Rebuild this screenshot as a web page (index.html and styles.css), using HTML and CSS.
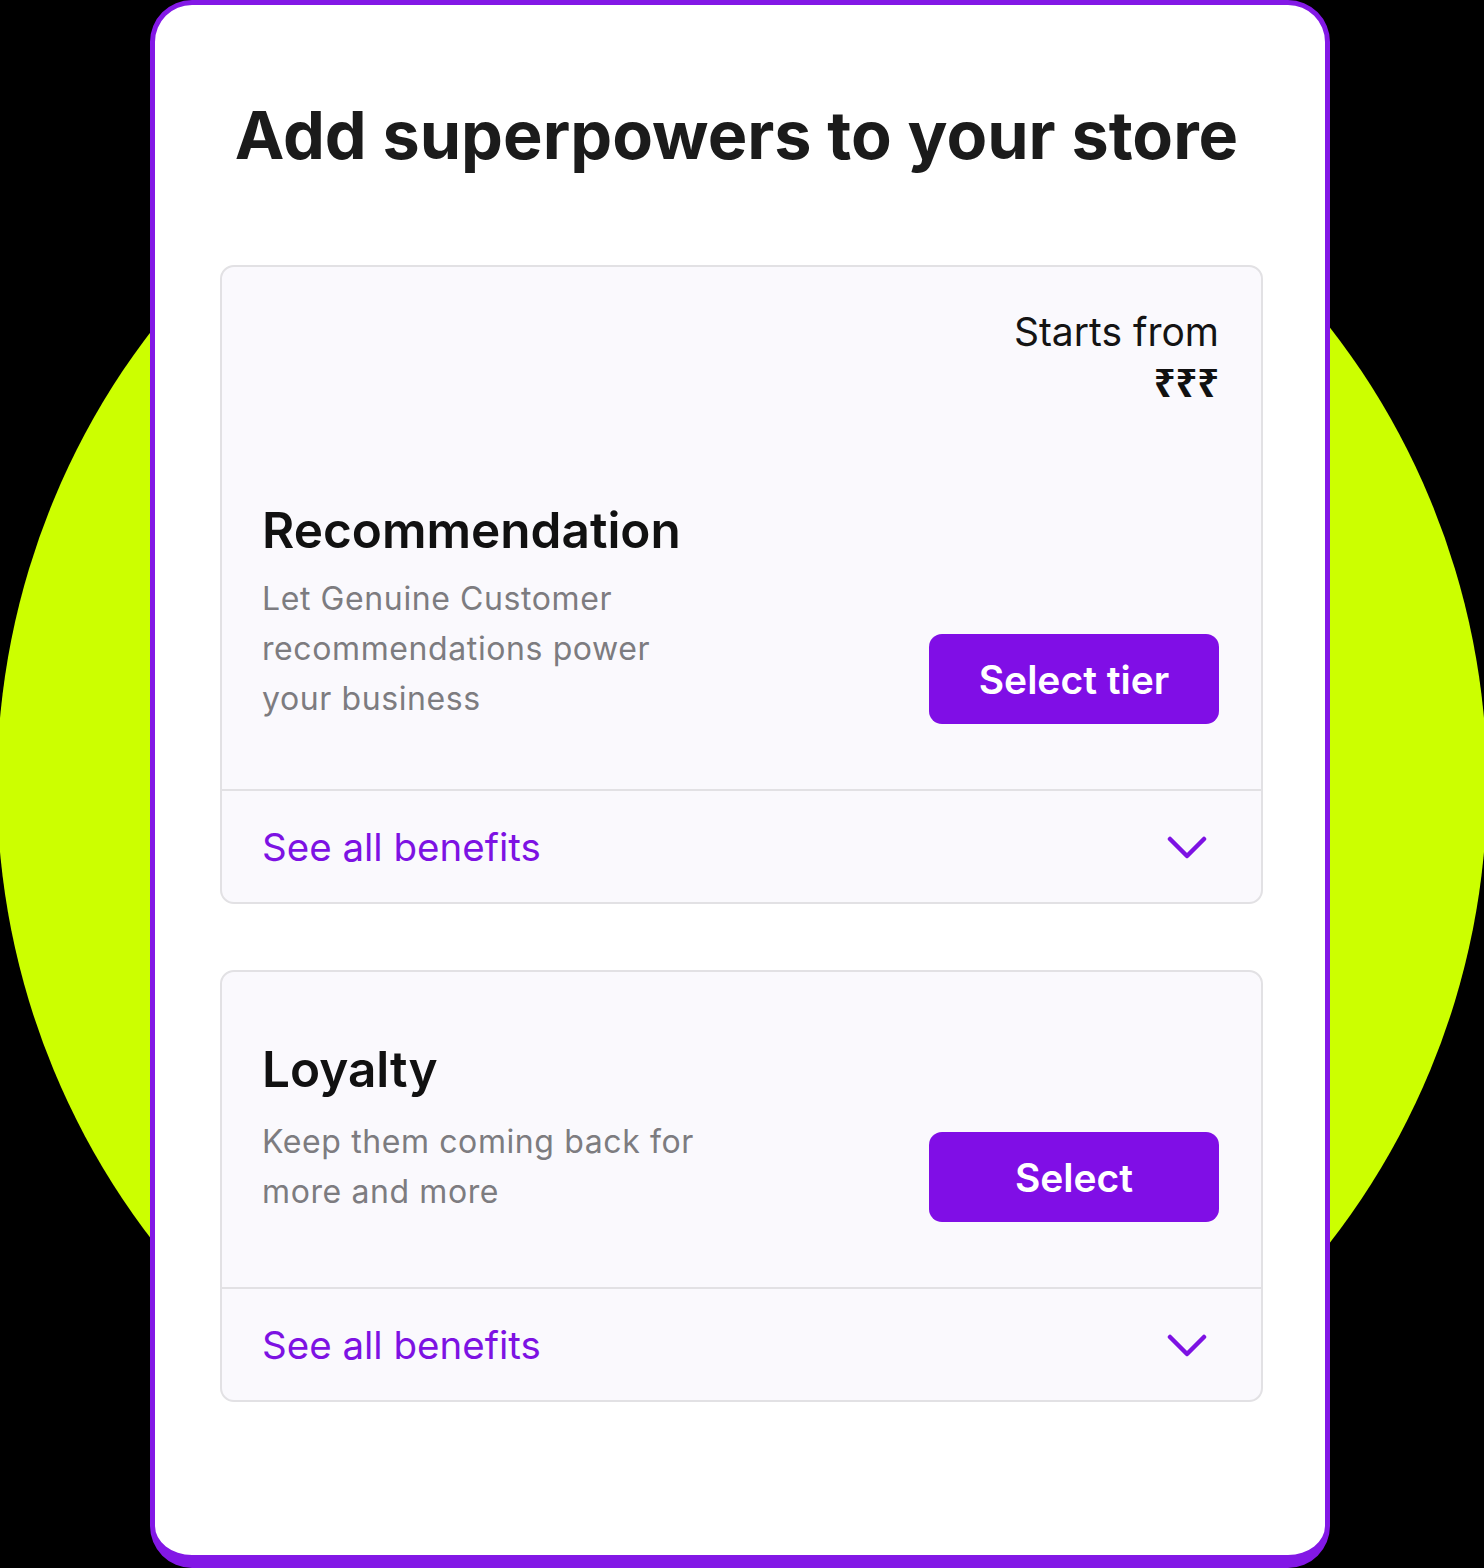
FILE: index.html
```html
<!DOCTYPE html>
<html lang="en">
<head>
<meta charset="utf-8">
<title>Add superpowers to your store</title>
<link rel="stylesheet" href="styles.css">
</head>
<body>
<div class="stage">
  <div class="blob"></div>
  <div class="device">
    <h1 class="title">Add superpowers to your store</h1>

    <section class="card card--rec">
      <div class="card-main">
        <div class="price">
          <div class="price-label">Starts from</div>
          <div class="price-value">₹₹₹</div>
        </div>
        <div class="row">
          <div class="info">
            <h2 class="name">Recommendation</h2>
            <p class="desc">Let Genuine Customer<br>recommendations power<br>your business</p>
          </div>
          <button class="btn">Select tier</button>
        </div>
      </div>
      <div class="card-foot">
        <span class="link">See all benefits</span>
        <svg class="chev" width="40" height="24" viewBox="0 0 40 24"><path d="M3 4 L20 21 L37 4" fill="none" stroke="#7d12e3" stroke-width="4.5" stroke-linecap="round" stroke-linejoin="round"/></svg>
      </div>
    </section>

    <section class="card card--loyalty">
      <div class="card-main">
        <div class="row">
          <div class="info">
            <h2 class="name">Loyalty</h2>
            <p class="desc">Keep them coming back for<br>more and more</p>
          </div>
          <button class="btn">Select</button>
        </div>
      </div>
      <div class="card-foot">
        <span class="link">See all benefits</span>
        <svg class="chev" width="40" height="24" viewBox="0 0 40 24"><path d="M3 4 L20 21 L37 4" fill="none" stroke="#7d12e3" stroke-width="4.5" stroke-linecap="round" stroke-linejoin="round"/></svg>
      </div>
    </section>
  </div>
</div>
</body>
</html>
```

FILE: styles.css
```css
* { box-sizing: border-box; }
html, body { margin: 0; padding: 0; }
body {
  background: #000;
  font-family: Inter, "Noto Sans", sans-serif;
  overflow: hidden;
}
.stage {
  position: relative;
  width: 1484px;
  height: 1568px;
  overflow: hidden;
}
.blob {
  position: absolute;
  left: -3px;
  top: 40px;
  width: 1490px;
  height: 1490px;
  border-radius: 50%;
  background: #ccff00;
}
.device {
  position: relative;
  margin-left: 150px;
  width: 1180px;
  height: 1568px;
  background: #fff;
  border: 5px solid #8318e6;
  border-bottom-width: 13px;
  border-radius: 42px;
  padding: 0 62px 0 65px;
}
.title {
  margin: 90px 0 90px;
  padding-right: 10px;
  text-align: center;
  font-size: 66.5px;
  font-weight: 700;
  line-height: 80px;
  color: #1b1b1b;
  white-space: nowrap;
}
.card {
  border: 2px solid #e2e1e4;
  border-radius: 14px;
  background: #faf9fd;
  margin-bottom: 66px;
}
.card-main {
  padding: 41px 42px 65px 40px;
  border-bottom: 2px solid #e2e1e4;
}
.card--loyalty .card-main { padding-top: 69px; padding-bottom: 65px; }
.price {
  text-align: right;
  margin-bottom: 94px;
}
.price-label {
  font-size: 39px;
  line-height: 48px;
  color: #141414;
}
.price-value {
  font-family: "Noto Sans", "DejaVu Sans", sans-serif;
  font-weight: 700;
  font-size: 38px;
  line-height: 52px;
  color: #111;
}
.row {
  display: flex;
  justify-content: space-between;
  align-items: flex-end;
}
.name {
  margin: 0 0 16px;
  font-size: 49.5px;
  font-weight: 600;
  line-height: 56px;
  color: #111;
}
.card--loyalty .name { margin-bottom: 20px; }
.desc {
  margin: 0;
  font-size: 32px;
  line-height: 50px;
  color: #7d7c80;
  letter-spacing: 0.6px;
}
.card--loyalty .desc { margin-bottom: 5px; }
.btn {
  width: 290px;
  height: 90px;
  border: 0;
  border-radius: 13px;
  background: #800ee6;
  color: #fff;
  font-family: Inter, sans-serif;
  font-size: 39px;
  font-weight: 600;
  flex-shrink: 0;
}
.card-foot {
  display: flex;
  justify-content: space-between;
  align-items: center;
  height: 111px;
  padding: 0 54px 0 40px;
}
.link {
  font-size: 38.5px;
  color: #7d12e3;
}
```
